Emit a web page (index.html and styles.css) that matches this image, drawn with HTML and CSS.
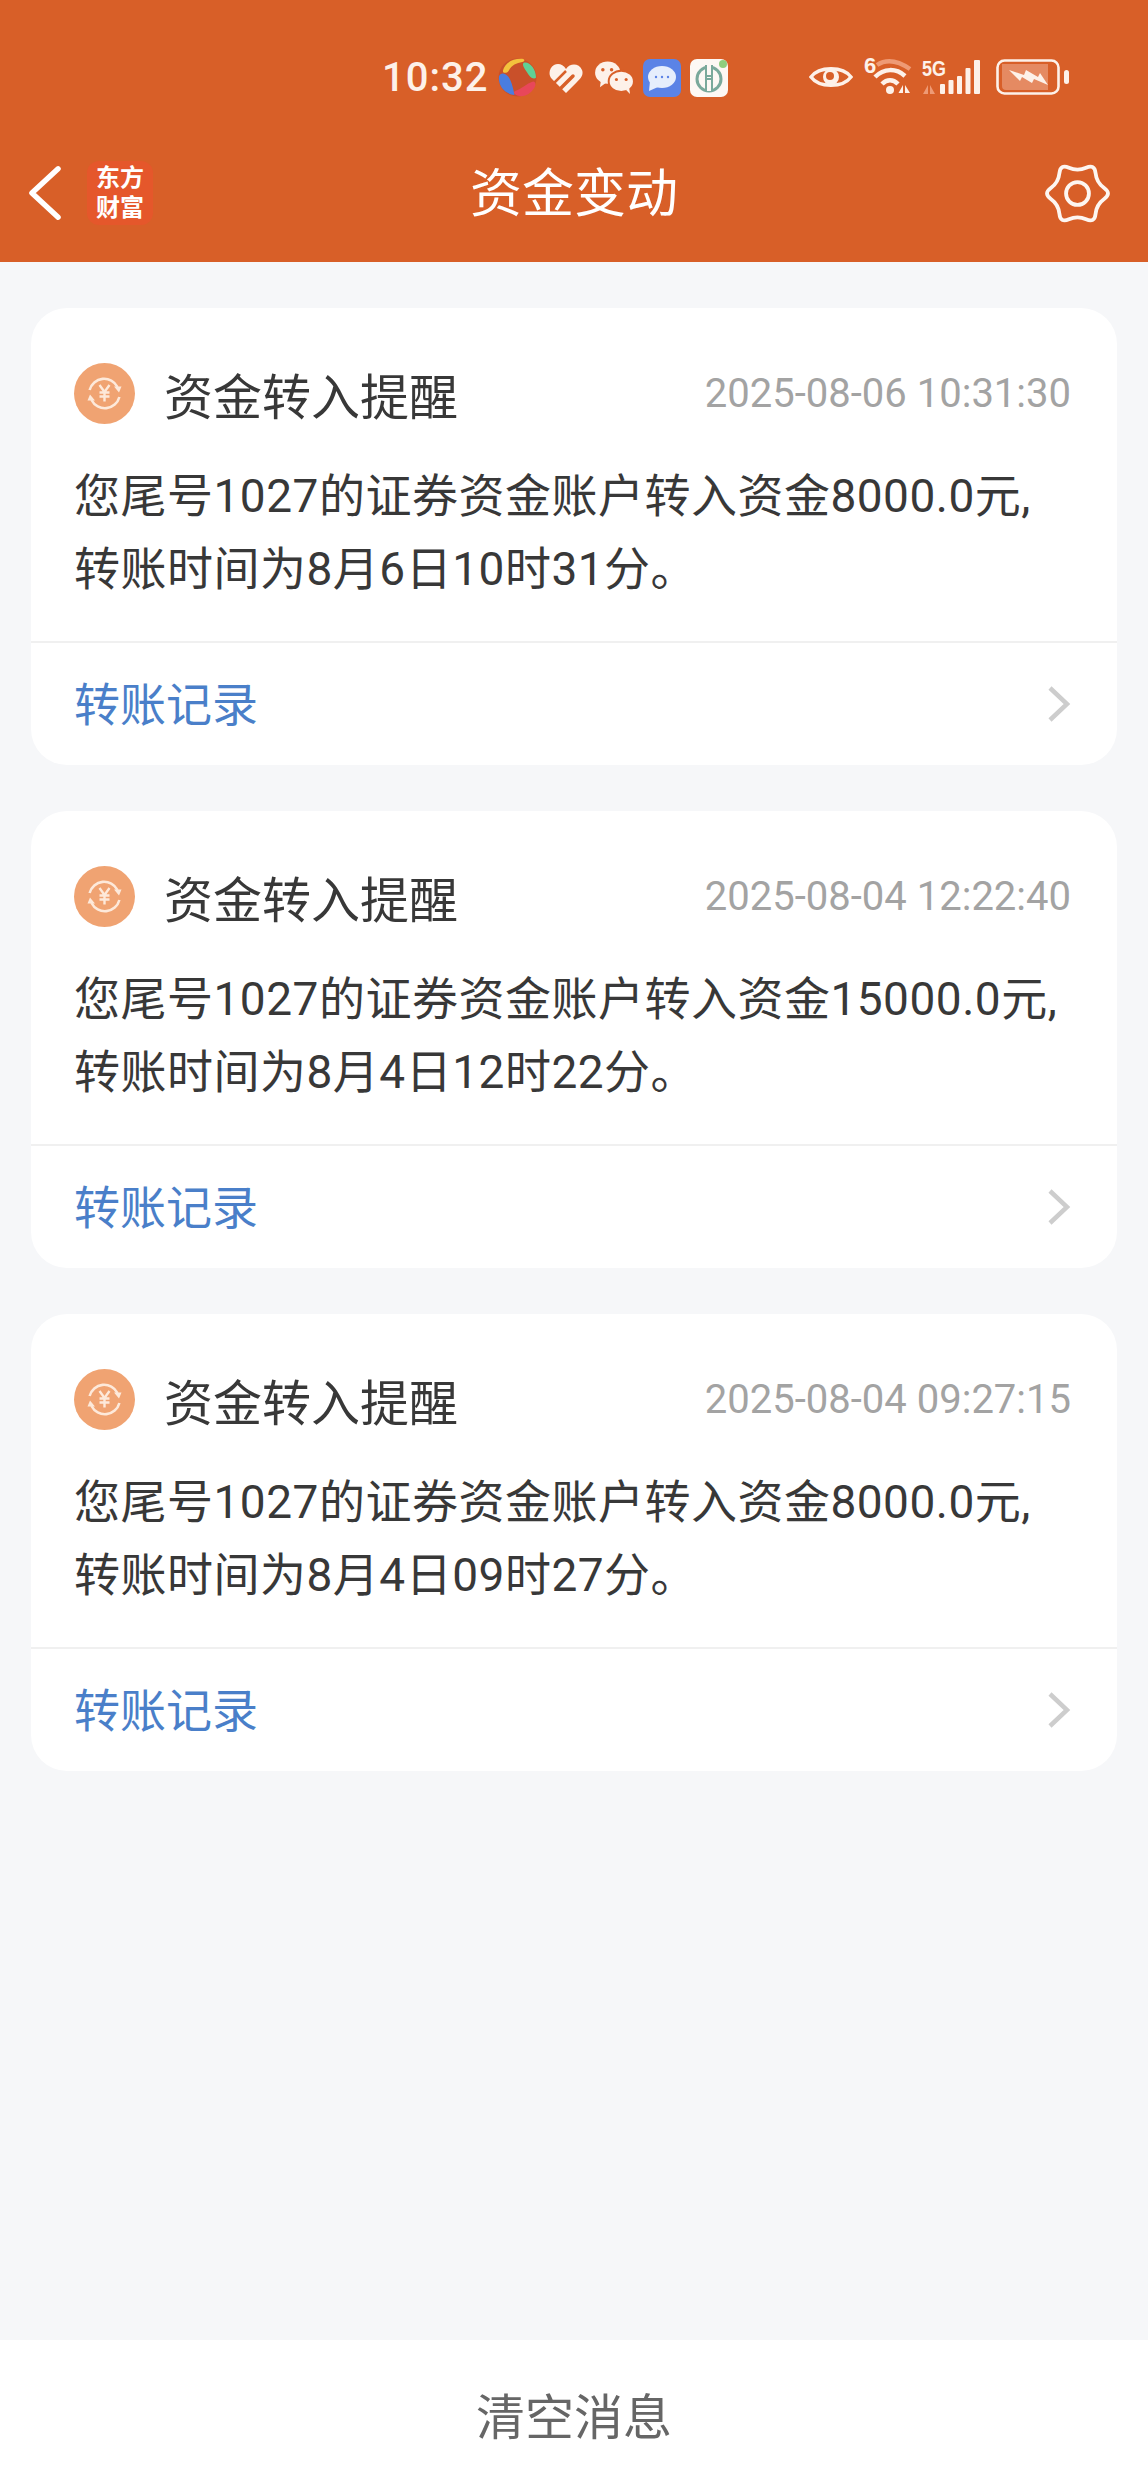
FILE: index.html
```html
<!DOCTYPE html>
<html lang="zh-CN">
<head>
    <meta charset="UTF-8">
    <meta name="viewport" content="width=device-width, initial-scale=1.0">
    <title>资金变动</title>
    <link rel="stylesheet" href="styles.css">
</head>
<body>
    <div class="page">
        <header class="top">
            <!-- Barra de status -->
            <div class="status">
                <div class="status-left">
                    <span class="time">10:32</span>
                    <svg class="ic-round" viewBox="0 0 40 40">
                        <circle cx="20" cy="20" r="19.500" fill="#c9502a"/>
                        <path d="M5 13C7 5 15 0 26 1C28 2 27 4 25 4C19 5 14 7 11 13C9 16 5 16 5 13Z" fill="#f3c13d"/>
                        <path d="M26 5C32 3 39 11 39 20C38 22 34 21 32 18C30 14 24 8 26 5Z" fill="#5fd095"/>
                        <path d="M1 19C2 16 5 15 8 17C13 20 15 28 17 38C7 37 0 29 1 19Z" fill="#4a7de0"/>
                        <path d="M17 34C24 32 29 26 36 24C39 24 39 28 37 31C33 37 27 40 22 39C18 38 15 36 17 34Z" fill="#e8475a"/>
                    </svg>
                    <svg class="ic-heart" viewBox="0 0 34 30">
                        <path d="M17 6C21 0 30 0 33 7C35 12 31 16 28 19L17 30L3 16C-1 12 0 5 5 2C9 0 14 1 17 6Z" fill="#fdf1e9"/>
                        <path d="M4 21L17 8" fill="none" stroke="#d85f28" stroke-width="2.500"/>
                        <path d="M10 27L24 13" fill="none" stroke="#d85f28" stroke-width="3.500" stroke-linecap="round"/>
                    </svg>
                    <svg class="ic-chat" viewBox="0 0 40 34">
                        <ellipse cx="13" cy="12" rx="13" ry="11.500" fill="#fdf1e9"/>
                        <path d="M6 20L5 27L12 22Z" fill="#fdf1e9"/>
                        <ellipse cx="27" cy="21" rx="13" ry="11" fill="#fdf1e9" stroke="#d85f28" stroke-width="2"/>
                        <path d="M32 30L36 34L35 27Z" fill="#fdf1e9"/>
                        <circle cx="8" cy="9" r="1.800" fill="#d85f28"/>
                        <circle cx="17" cy="9" r="1.800" fill="#d85f28"/>
                        <circle cx="22" cy="19" r="1.600" fill="#d85f28"/>
                        <circle cx="32" cy="19" r="1.600" fill="#d85f28"/>
                    </svg>
                    <svg class="ic-app" viewBox="0 0 38 38">
                        <rect width="38" height="38" rx="7" fill="#5b83e6"/>
                        <ellipse cx="19" cy="18" rx="14" ry="11" fill="#e6eefc"/>
                        <path d="M7 22L6 32L15 28Z" fill="#e6eefc"/>
                        <circle cx="13" cy="18" r="1.200" fill="#5b83e6"/>
                        <circle cx="19" cy="18" r="1.200" fill="#5b83e6"/>
                        <circle cx="25" cy="18" r="1.200" fill="#5b83e6"/>
                    </svg>
                    <svg class="ic-app" viewBox="0 0 38 38">
                        <rect width="38" height="38" rx="7" fill="#fdf8f4"/>
                        <circle cx="19" cy="20" r="12" fill="none" stroke="#7aa99b" stroke-width="3"/>
                        <rect x="15" y="6" width="8" height="26" fill="#fdf8f4"/>
                        <path d="M16 6V20H22V6M16 20V32M22 20V32M15 17H23" fill="none" stroke="#7aa99b" stroke-width="2"/>
                        <circle cx="33" cy="5" r="4" fill="#8fce7e"/>
                    </svg>
                </div>
                <div class="status-right">
                    <svg class="ic-eye" viewBox="0 0 44 28">
                        <path d="M2 14C10 3 34 3 42 14C34 25 10 25 2 14Z" fill="none" stroke="#fdf1e9" stroke-width="3.400"/>
                        <circle cx="22" cy="14" r="8" fill="#fdf1e9"/>
                        <circle cx="21" cy="13" r="4" fill="#d85f28"/>
                    </svg>
                    <svg class="ic-wifi" viewBox="0 0 50 38">
                        <text x="0" y="15" class="tiny">6</text>
                        <path d="M13 7C22 1 33 2 46 11" fill="none" stroke="#ee9a75" stroke-width="4.500"/>
                        <path d="M11 19C20 10 32 10 41 18" fill="none" stroke="#fdf1e9" stroke-width="4.500"/>
                        <path d="M18 26C23 21 29 21 34 26" fill="none" stroke="#fdf1e9" stroke-width="4.500"/>
                        <circle cx="26" cy="32" r="4" fill="#fdf1e9"/>
                        <path d="M39 27V35H34.500ZM41 27V35H46Z" fill="#fdf1e9"/>
                    </svg>
                    <svg class="ic-signal" viewBox="0 0 60 36">
                        <text x="0" y="17" class="tiny" textLength="24" lengthAdjust="spacingAndGlyphs">5G</text>
                        <path d="M6 26V35H1ZM8 26V35H13Z" fill="#ee9a75"/>
                        <rect x="18" y="25" width="5" height="10" rx="1" fill="#fdf1e9"/>
                        <rect x="26.500" y="21" width="5" height="14" rx="1" fill="#fdf1e9"/>
                        <rect x="35" y="17" width="5" height="18" rx="1" fill="#fdf1e9"/>
                        <rect x="43.500" y="9" width="5" height="26" rx="1" fill="#fdf1e9"/>
                        <rect x="52" y="1" width="6" height="34" rx="1" fill="#fdf1e9"/>
                    </svg>
                    <svg class="ic-batt" viewBox="0 0 74 36">
                        <rect x="1.500" y="1.500" width="61" height="33" rx="7" fill="none" stroke="#fdf1e9" stroke-width="2.600"/>
                        <path d="M6 5H52V31H10C7.500 31 6 29.500 6 27Z" fill="#e58a62"/>
                        <rect x="68" y="11" width="5" height="14" rx="2.500" fill="#fdf1e9"/>
                        <path d="M13 11L28 16L30 11L42 18L44 14L52 26L38 20L36 24L26 18L24 22Z" fill="#fdf1e9"/>
                    </svg>
                </div>
            </div>
            <!-- Barra de titulo -->
            <div class="nav">
                <div class="nav-left">
                    <svg class="ic-back" viewBox="0 0 34 56">
                        <path d="M31 3L4 28L31 53" fill="none" stroke="#fff" stroke-width="5.500" stroke-linecap="round" stroke-linejoin="round"/>
                    </svg>
                    <div class="logo">东方<br>财富</div>
                </div>
                <h1 class="nav-title">资金变动</h1>
                <svg class="ic-gear" viewBox="-2 0 68 64">
                    <path d="M59.96 26.25Q68 32 59.96 37.75Q51.92 43.5 50.96 53.34Q50 63.18 41 59.09Q32 55 23 59.09Q14 63.18 13.04 53.34Q12.08 43.5 4.04 37.75Q-4 32 4.04 26.25Q12.08 20.5 13.04 10.66Q14 .82 23 4.91Q32 9 41 4.91Q50 .82 50.96 10.66Q51.92 20.5 59.96 26.25Z" fill="none" stroke="#fdf6f1" stroke-width="4"/>
                    <circle cx="32" cy="32" r="12" fill="none" stroke="#fdf6f1" stroke-width="4"/>
                </svg>
            </div>
        </header>

        <main class="list">
            <section class="card">
                <div class="card-main">
                    <div class="card-head">
                        <svg class="ic-money" viewBox="0 0 61 61">
                            <use href="#money"/>
                        </svg>
                        <span class="card-title">资金转入提醒</span>
                        <span class="card-date">2025-08-06 10:31:30</span>
                    </div>
                    <p class="card-text">您尾号1027的证券资金账户转入资金8000.0元,<br>转账时间为8月6日10时31分。</p>
                </div>
                <div class="card-link">
                    <span>转账记录</span>
                    <svg class="ic-more" viewBox="0 0 24 38"><path d="M3 3L20 19L3 35" fill="none" stroke="#cdcdcd" stroke-width="4.500"/></svg>
                </div>
            </section>

            <section class="card">
                <div class="card-main">
                    <div class="card-head">
                        <svg class="ic-money" viewBox="0 0 61 61">
                            <use href="#money"/>
                        </svg>
                        <span class="card-title">资金转入提醒</span>
                        <span class="card-date">2025-08-04 12:22:40</span>
                    </div>
                    <p class="card-text">您尾号1027的证券资金账户转入资金15000.0元,<br>转账时间为8月4日12时22分。</p>
                </div>
                <div class="card-link">
                    <span>转账记录</span>
                    <svg class="ic-more" viewBox="0 0 24 38"><path d="M3 3L20 19L3 35" fill="none" stroke="#cdcdcd" stroke-width="4.500"/></svg>
                </div>
            </section>

            <section class="card">
                <div class="card-main">
                    <div class="card-head">
                        <svg class="ic-money" viewBox="0 0 61 61">
                            <use href="#money"/>
                        </svg>
                        <span class="card-title">资金转入提醒</span>
                        <span class="card-date">2025-08-04 09:27:15</span>
                    </div>
                    <p class="card-text">您尾号1027的证券资金账户转入资金8000.0元,<br>转账时间为8月4日09时27分。</p>
                </div>
                <div class="card-link">
                    <span>转账记录</span>
                    <svg class="ic-more" viewBox="0 0 24 38"><path d="M3 3L20 19L3 35" fill="none" stroke="#cdcdcd" stroke-width="4.500"/></svg>
                </div>
            </section>
        </main>

        <footer class="bottom">清空消息</footer>
    </div>

    <!-- Icone reutilizado nos cartoes -->
    <svg class="defs" width="0" height="0">
        <symbol id="money" viewBox="0 0 61 61">
            <circle cx="30.500" cy="30.500" r="30.500" fill="#f0a372"/>
            <path d="M15.600 27A15 15 0 0 1 43.500 24M45.400 34A15 15 0 0 1 17.500 37" fill="none" stroke="#fde9da" stroke-width="2.600"/>
            <path d="M40 23.500H47.500L45 29.500ZM21 37.500H13.500L16 31.500Z" fill="#fde9da"/>
            <path d="M25.500 22L30.500 29L35.500 22M25.500 29.500H35.500M25.500 33.500H35.500M30.500 29V38.500" fill="none" stroke="#fde9da" stroke-width="2.400"/>
        </symbol>
    </svg>
</body>
</html>
```

FILE: styles.css
```css
* {
    margin: 0;
    padding: 0;
    box-sizing: border-box;
}

body {
    font-family: Roboto, "Noto Sans CJK SC", sans-serif;
    background-color: #f6f7f9;
    color: #383838;
}

svg {
    display: block;
    flex-shrink: 0;
}

.defs {
    position: absolute;
}

.page {
    width: 1148px;
    height: 2492px;
    display: flex;
    flex-direction: column;
}

/* Cabecalho */
.top {
    height: 262px;
    background-color: #d85f28;
    color: #fff;
}

.status {
    height: 141px;
    padding: 58px 78px 0 382px;
    display: flex;
    justify-content: space-between;
    align-items: flex-start;
}

.status-left {
    display: flex;
    align-items: center;
    height: 39px;
}

.time {
    font-size: 40px;
    font-weight: 500;
    letter-spacing: 1px;
    color: #fdf1e9;
    width: 116px;
}

.ic-round {
    width: 39px;
    height: 39px;
}

.ic-heart {
    width: 34px;
    height: 30px;
    margin-left: 12px;
}

.ic-chat {
    width: 39px;
    height: 33px;
    margin-left: 12px;
}

.ic-app {
    width: 38px;
    height: 38px;
    margin-left: 9px;
}

.status-right {
    display: flex;
    align-items: center;
    height: 37px;
}

.ic-eye {
    width: 44px;
    height: 28px;
}

.ic-wifi {
    width: 50px;
    height: 38px;
    margin-left: 11px;
    overflow: visible;
}

.ic-signal {
    width: 60px;
    height: 36px;
    margin-left: 8px;
    overflow: visible;
}

.ic-batt {
    width: 74px;
    height: 36px;
    margin-left: 14px;
}

.tiny {
    font-family: "Liberation Sans", sans-serif;
    font-size: 22px;
    font-weight: 700;
    fill: #fdf1e9;
}

.nav {
    height: 104px;
    padding: 0 38px 0 28px;
    display: flex;
    align-items: center;
    justify-content: space-between;
    position: relative;
}

.nav-left {
    display: flex;
    align-items: center;
}

.ic-back {
    width: 33px;
    height: 56px;
}

.logo {
    width: 66px;
    height: 64px;
    margin-left: 26px;
    padding-top: 2px;
    border-radius: 12px;
    background-color: #e5572b;
    font-size: 24px;
    font-weight: 700;
    line-height: 30px;
    text-align: center;
}

.nav-title {
    position: absolute;
    left: 0;
    right: 0;
    top: 19px;
    text-align: center;
    font-size: 52px;
    line-height: 70px;
    font-weight: 400;
}

.ic-gear {
    width: 65px;
    height: 61px;
}

/* Lista */
.list {
    flex: 1;
    padding: 46px 31px 0;
    display: flex;
    flex-direction: column;
    gap: 46px;
}

.card {
    height: 457px;
    background-color: #fff;
    border-radius: 36px;
    display: flex;
    flex-direction: column;
}

.card-main {
    height: 333px;
    padding: 55px 46px 0 43px;
}

.card-head {
    display: flex;
    align-items: center;
    height: 61px;
}

.ic-money {
    width: 61px;
    height: 61px;
}

.card-title {
    margin-left: 29px;
    font-size: 49px;
}

.card-date {
    margin-left: auto;
    font-size: 40px;
    color: #a3a3a3;
}

.card-text {
    margin-top: 36px;
    font-size: 46px;
    letter-spacing: .5px;
    line-height: 73px;
    white-space: nowrap;
}

.card-link {
    flex: 1;
    border-top: 2px solid #f0f0f0;
    padding: 0 46px 0 43px;
    display: flex;
    align-items: center;
    justify-content: space-between;
    font-size: 46px;
    color: #4a7fc9;
}

.card-link span {
    margin-bottom: 6px;
}

.ic-more {
    width: 24px;
    height: 38px;
}

/* Rodape */
.bottom {
    height: 152px;
    padding-bottom: 5px;
    background-color: #fff;
    display: flex;
    align-items: center;
    justify-content: center;
    font-size: 49px;
    color: #666;
}
```
